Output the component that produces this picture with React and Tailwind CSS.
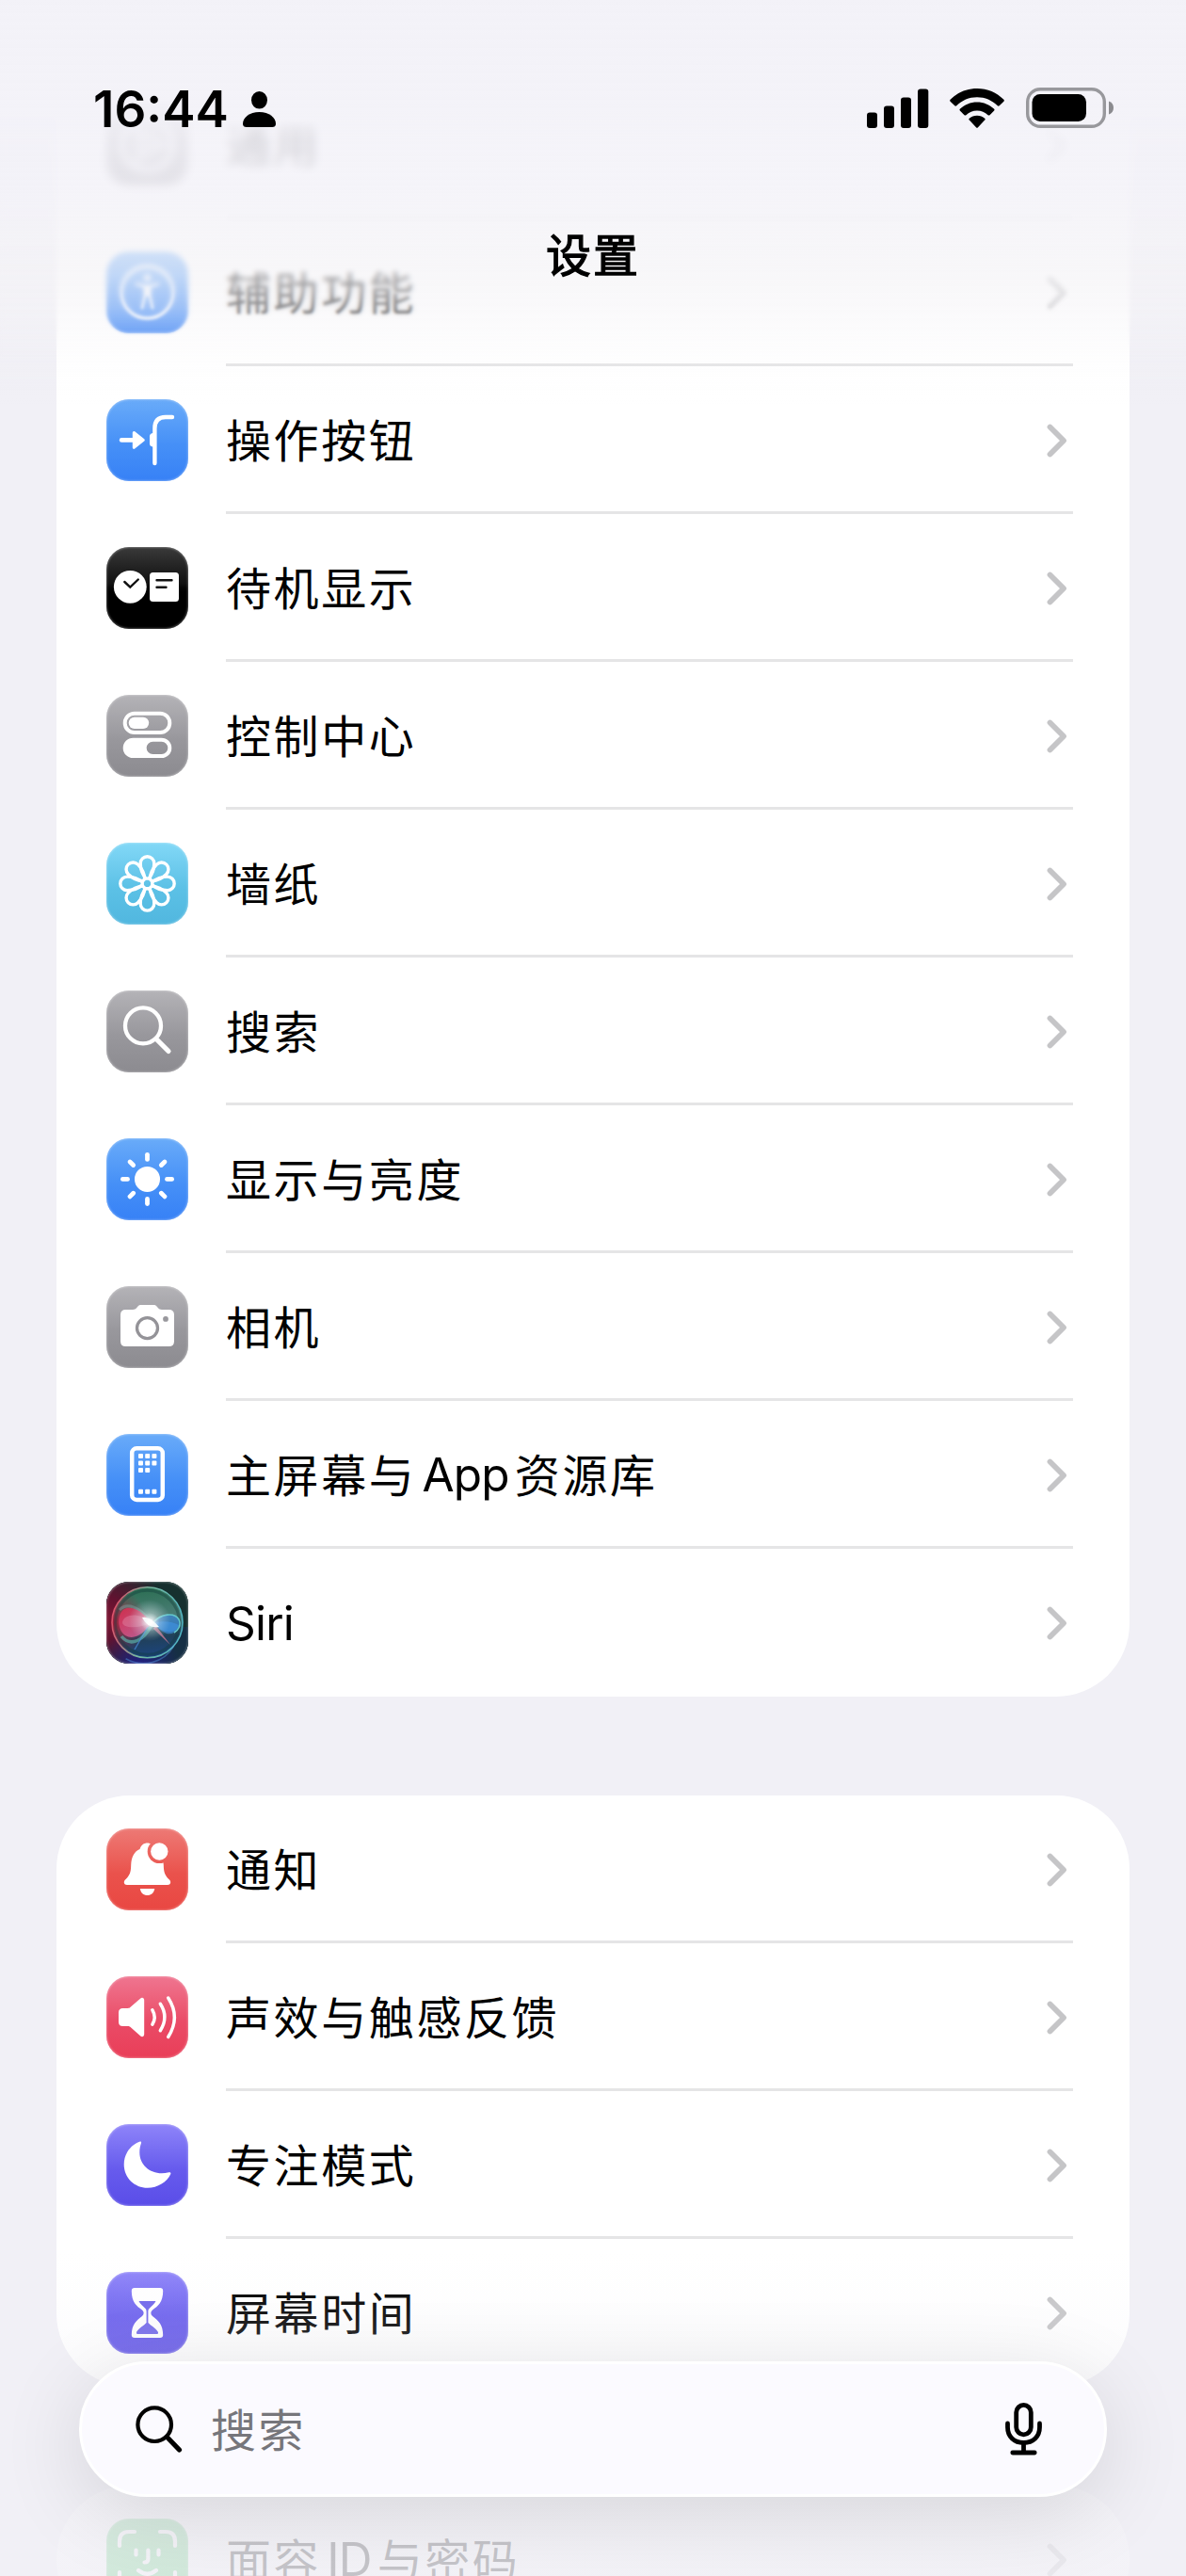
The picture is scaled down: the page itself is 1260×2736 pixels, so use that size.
const LATIN = 'font-["Inter","Liberation_Sans",sans-serif]';

function Glyph({ children }) {
  return (
    <svg viewBox="0 0 87 87" className="size-[87px]" fill="none">
      {children}
    </svg>
  );
}

const strokeProps = { stroke: "#fff", strokeLinecap: "round", strokeLinejoin: "round" };

function GeneralGlyph() {
  return (
    <Glyph>
      <circle cx="43.5" cy="43.5" r="27" {...strokeProps} strokeWidth="6" />
      <circle cx="43.5" cy="43.5" r="12" {...strokeProps} strokeWidth="4" />
      <path d="M43.5 43.5H68M43.5 43.5L31 22M43.5 43.5L31 65" {...strokeProps} strokeWidth="4" />
    </Glyph>
  );
}

function AccessibilityGlyph() {
  return (
    <Glyph>
      <circle cx="43.5" cy="43.5" r="27.5" {...strokeProps} strokeWidth="3.5" />
      <circle cx="43.5" cy="28" r="3.6" fill="#fff" />
      <path d="M32 34.500L41 37V46L38 60M55 34.500L46 37V46L49 60" {...strokeProps} strokeWidth="3" />
      <path d="M40 35.500h7v12h-7z" fill="#fff" />
    </Glyph>
  );
}

function ActionGlyph() {
  return (
    <Glyph>
      <path d="M16.200 43.400H30" {...strokeProps} strokeWidth="4.800" />
      <path d="M29.300 35.500L39.300 43.400L29.300 51.300Z" fill="#fff" {...strokeProps} strokeWidth="3" />
      <path d="M51.400 68V31Q51.400 19 63 19H70" {...strokeProps} strokeWidth="4.400" />
      <path d="M51 36H49Q46 36.500 46 39.500V47Q46 50 49 50.500H51Z" fill="#fff" />
    </Glyph>
  );
}

function StandByGlyph() {
  return (
    <Glyph>
      <circle cx="25.300" cy="42.300" r="17.400" fill="#fff" />
      <path d="M19.300 37L25.300 42.600L33.800 34.500" stroke="#111" strokeWidth="2.400" strokeLinecap="round" />
      <rect x="46" y="27" width="31" height="31" rx="3.500" fill="#fff" />
      <path d="M53.500 35.200H69.500M53.500 42.800H63.500" stroke="#111" strokeWidth="2.400" strokeLinecap="round" />
    </Glyph>
  );
}

function ControlGlyph() {
  return (
    <Glyph>
      <rect x="19.700" y="19.700" width="47.600" height="20.400" rx="10.200" stroke="#fff" strokeWidth="4" />
      <rect x="23.700" y="23.700" width="21.500" height="12.300" rx="6.150" fill="#fff" />
      <path
        fillRule="evenodd"
        fill="#fff"
        d="M28.400 45.700H58.600A10.700 10.700 0 0 1 58.600 67.100H28.400A10.700 10.700 0 0 1 28.400 45.700ZM49.300 49.700A6.650 6.650 0 0 0 49.300 63H58.700A6.650 6.650 0 0 0 58.700 49.700Z"
      />
    </Glyph>
  );
}

function FlowerGlyph() {
  return (
    <Glyph>
      <g {...strokeProps} strokeWidth="3.400">
        {[0, 45, 90, 135, 180, 225, 270, 315].map((a) => (
          <path
            key={a}
            transform={`translate(43.500 43.400) rotate(${a})`}
            d="M-1.500 -5.300C-6 -10.500 -7.300 -15 -7.300 -21.400A7.300 7.300 0 0 1 7.300 -21.400C7.300 -15 6 -10.500 1.500 -5.300Z"
          />
        ))}
      </g>
    </Glyph>
  );
}

function SearchGlyph() {
  return (
    <Glyph>
      <circle cx="39" cy="37.400" r="19" {...strokeProps} strokeWidth="4.300" />
      <path d="M53.500 52L66 64.500" {...strokeProps} strokeWidth="5.200" />
    </Glyph>
  );
}

function SunGlyph() {
  return (
    <Glyph>
      <circle cx="43.500" cy="43.400" r="13.500" fill="#fff" />
      {[0, 45, 90, 135, 180, 225, 270, 315].map((a) => (
        <path key={a} transform={`rotate(${a} 43.500 43.400)`} d="M43.500 17.300V22.400" {...strokeProps} strokeWidth="4.800" />
      ))}
    </Glyph>
  );
}

function CameraGlyph() {
  return (
    <Glyph>
      <path
        fill="#fff"
        d="M20.500 25H28C30 25 31 24.500 32 23.300L33.500 21.500C34.500 20.400 35.500 20 37 20H50C51.500 20 52.500 20.400 53.500 21.500L55 23.300C56 24.500 57 25 59 25H66.500Q72 25 72 30.500V58.500Q72 64 66.500 64H20.500Q15 64 15 58.500V30.500Q15 25 20.500 25Z"
      />
      <circle cx="43.500" cy="44.600" r="11" stroke="#949398" strokeWidth="3.300" />
      <circle cx="63" cy="34.900" r="2.900" fill="#99989d" />
    </Glyph>
  );
}

function HomeGlyph() {
  const cells = [
    [34, 21], [41.200, 21], [48.400, 21],
    [34, 28.600], [41.200, 28.600], [48.400, 28.600],
    [34, 36], [41.200, 36],
    [34, 58.800], [41.200, 58.800], [48.400, 58.800],
  ];
  return (
    <Glyph>
      <rect x="27.200" y="15.300" width="32.600" height="54.600" rx="5" stroke="#fff" strokeWidth="4.500" />
      {cells.map(([x, y]) => (
        <rect key={`${x}-${y}`} x={x} y={y} width="5" height="5" rx="1" fill="#fff" />
      ))}
    </Glyph>
  );
}

function SiriGlyph() {
  return (
    <Glyph>
      <defs>
        <radialGradient id="siriRed" cx="0" cy="0.45" r="0.75">
          <stop offset="0" stopColor="#7d1432" />
          <stop offset="0.35" stopColor="#611230" />
          <stop offset="1" stopColor="#611230" stopOpacity="0" />
        </radialGradient>
        <radialGradient id="siriBlue" cx="0.4" cy="1.05" r="0.5">
          <stop offset="0" stopColor="#1d1f8c" />
          <stop offset="1" stopColor="#241a80" stopOpacity="0" />
        </radialGradient>
        <linearGradient id="siriRing" x1="0" y1="0.4" x2="1" y2="0.6">
          <stop offset="0" stopColor="#e0506a" />
          <stop offset="0.45" stopColor="#76b8a0" />
          <stop offset="1" stopColor="#4fb4c4" />
        </linearGradient>
        <linearGradient id="siriOrb" x1="0.45" y1="0" x2="0.55" y2="1">
          <stop offset="0" stopColor="#2b6e52" />
          <stop offset="0.45" stopColor="#4b7d77" />
          <stop offset="0.72" stopColor="#20405a" />
          <stop offset="1" stopColor="#1c4580" />
        </linearGradient>
        <radialGradient id="siriOrbRed" cx="0" cy="0.5" r="0.5">
          <stop offset="0" stopColor="#a31c3a" />
          <stop offset="1" stopColor="#a31c3a" stopOpacity="0" />
        </radialGradient>
        <radialGradient id="siriGlow">
          <stop offset="0" stopColor="#fff" />
          <stop offset="0.25" stopColor="#fff" stopOpacity="0.7" />
          <stop offset="1" stopColor="#cfe8f0" stopOpacity="0" />
        </radialGradient>
        <linearGradient id="siriPink" x1="0" y1="0" x2="0.6" y2="1">
          <stop offset="0" stopColor="#dd2a4c" />
          <stop offset="1" stopColor="#d05c94" />
        </linearGradient>
      </defs>
      <rect width="87" height="87" fill="#16302f" />
      <rect y="48" x="40" width="47" height="39" fill="#16304a" opacity="0.8" />
      <rect width="87" height="87" fill="url(#siriRed)" />
      <rect width="87" height="87" fill="url(#siriBlue)" />
      <circle cx="43.500" cy="43.300" r="37.500" fill="url(#siriOrb)" />
      <circle cx="43.500" cy="43.300" r="37.500" fill="url(#siriOrbRed)" />
      <circle cx="43.500" cy="43.300" r="37.500" stroke="url(#siriRing)" strokeWidth="1.600" />
      <circle cx="43.500" cy="43.300" r="34" stroke="#123c3c" strokeWidth="3" opacity="0.4" />
      <path d="M18 80A37.500 37.500 0 0 0 70 70" stroke="#5aa8f0" strokeWidth="1.600" transform="rotate(-4 43.500 43.500)" opacity="0.4" />
      <path d="M16 58C26 70 40 62 48 46" stroke="#5ec2b4" strokeWidth="3.500" opacity="0.6" />
      <path d="M14 30C22 21 36 28 46 41" stroke="#7d9c9c" strokeWidth="3" opacity="0.5" />
      <path d="M48 44C38 30 26 25 19 29C11 34 11 51 20 57C30 63 40 54 48 44Z" fill="url(#siriPink)" opacity="0.85" />
      <path d="M48 43C34 32 19 34 17 43C17 50 36 50 48 43Z" fill="#e79ab8" opacity="0.35" />
      <path d="M50 43C58 34 72 32 77 40C80 48 73 57 64 55C58 53 54 48 50 43Z" fill="#3a84cf" opacity="0.75" />
      <path d="M50 44C60 41 70 42 77 46C74 56 60 56 50 44Z" fill="#3f94e4" opacity="0.6" />
      <path d="M50 43C58 34 72 32 77 40C80 46 76 52 72 54" stroke="#62c6cb" strokeWidth="1.600" />
      <path d="M52 46L68 67L50 50Z" fill="#d07d98" opacity="0.75" />
      <path d="M44 48L30 72" stroke="#4a90e0" strokeWidth="1.400" opacity="0.7" />
      <circle cx="46" cy="41" r="22" fill="url(#siriGlow)" opacity="0.65" />
      <path d="M38 38Q46 36 56 48Q44 50 38 38Z" fill="#fff" opacity="0.95" />
      <circle cx="46.500" cy="43" r="10" fill="url(#siriGlow)" />
    </Glyph>
  );
}

function BellGlyph() {
  return (
    <Glyph>
      <defs>
        <mask id="bellCut">
          <rect width="87" height="87" fill="#fff" />
          <circle cx="56.300" cy="24.500" r="12.600" fill="#000" />
        </mask>
      </defs>
      <path
        mask="url(#bellCut)"
        fill="#fff"
        d="M22 60C18.500 60 18 56.700 20 54.500C24.500 50 26 47.500 26.200 39C26.500 30 30 24 35.500 22C37 17.500 40 15.500 43.500 15.500C47 15.500 50 17.500 51.500 22C57 24.500 60.500 30 60.800 39C61 47.500 62.500 50 67 54.500C69 56.700 68.500 60 65 60Z"
      />
      <circle cx="56.300" cy="24.500" r="9.200" fill="#fff" />
      <path d="M35.800 64H51.300C50.500 68.500 47.500 71 43.500 71C39.500 71 36.500 68.500 35.800 64Z" fill="#fff" />
    </Glyph>
  );
}

function SpeakerGlyph() {
  return (
    <Glyph>
      <path
        fill="#fff"
        d="M17.500 34H23C24 34 24.600 33.800 25.300 33.100L36 23.700C38 22 40.200 23 40.200 25.500V61.500C40.200 64 38 65 36 63.300L25.300 53.800C24.600 53.100 24 53 23 53H17.500Q13 53 13 48.500V38.500Q13 34 17.500 34Z"
      />
      <g {...strokeProps} strokeWidth="3.500">
        <path d="M48.900 35.800Q53.500 43.400 48.900 51.200" />
        <path d="M57.300 29.300Q66.500 43.400 57.300 57.700" />
        <path d="M65.700 23Q79 43.400 65.700 64.500" />
      </g>
    </Glyph>
  );
}

function MoonGlyph() {
  return (
    <Glyph>
      <path
        fill="#fff"
        d="M35.800 18.600C25.500 22.500 18.700 31.500 18.700 43C18.700 57 30 67.800 43.800 67.800C54.500 67.800 64.500 61.500 68.200 53.300C68.900 51.600 67.800 50.800 66.300 51.300C50 55.500 35.300 45.500 35.300 30C35.300 26 36 23 37 20.200C37.400 18.900 36.900 18.200 35.800 18.600Z"
      />
    </Glyph>
  );
}

function HourglassGlyph() {
  return (
    <Glyph>
      <path
        fill="#fff"
        d="M30 17H57Q60.200 17 60.200 20.200C60.200 32 55 36 49 40.500C46.800 42.200 46.800 45.200 49 47C55 51.500 60.200 56 60.200 67Q60.200 70 57 70H30Q26.800 70 26.800 67C26.800 56 32 51.500 38 47C40.200 45.200 40.200 42.200 38 40.500C32 36 26.800 32 26.800 20.200Q26.800 17 30 17Z"
      />
      <path
        fill="#6d63ea"
        d="M34.500 31H52.500C51.500 34 48 36.200 45.500 39C44.500 40 44.400 41 44.400 43V54C47 57 52 59 55 64Q55.500 66 54 66H33Q31.500 66 32 64C35 59 40 57 42.600 54V43C42.600 41 42.500 40 41.500 39C39 36.200 35.500 34 34.500 31Z"
      />
    </Glyph>
  );
}

function FaceGlyph() {
  return (
    <Glyph>
      <g {...strokeProps} strokeWidth="4.200">
        <path d="M14 29V24Q14 14 24 14H30M57 14H63Q73 14 73 24V29M14 57V63Q14 73 24 73H30M57 73H63Q73 73 73 63V57" />
        <path d="M31.500 33.500V38.500M55.500 33.500V38.500M44.400 33.500V43Q44.400 46.500 40.500 46.500M34 55Q43.500 62.500 53 55" />
      </g>
    </Glyph>
  );
}

const BLUE = "bg-linear-to-b from-[#69abf9] via-[#4690f7] via-55% to-[#3781f6]";
const GRAY = "bg-linear-to-b from-[#b4b3b7] via-[#98979c] via-55% to-[#8c8b90]";
const INDIGO = "bg-linear-to-b from-[#8f84f9] via-[#675bed] via-55% to-[#5a4de8]";

const groups = [
  [
    { label: "通用", Icon: GeneralGlyph, tile: GRAY },
    { label: "辅助功能", Icon: AccessibilityGlyph, tile: BLUE },
    { label: "操作按钮", Icon: ActionGlyph, tile: BLUE },
    { label: "待机显示", Icon: StandByGlyph, tile: "bg-linear-to-b from-[#3a3a3a] via-[#111111] via-45% to-black to-60%" },
    { label: "控制中心", Icon: ControlGlyph, tile: GRAY },
    { label: "墙纸", Icon: FlowerGlyph, tile: "bg-linear-to-b from-[#82d8f7] via-[#5cc1e6] via-55% to-[#51b7df]" },
    { label: "搜索", Icon: SearchGlyph, tile: GRAY },
    { label: "显示与亮度", Icon: SunGlyph, tile: BLUE },
    { label: "相机", Icon: CameraGlyph, tile: GRAY },
    { label: "主屏幕与", latin: "App", rest: "资源库", Icon: HomeGlyph, tile: BLUE },
    { latin: "Siri", Icon: SiriGlyph, tile: "bg-[#16302f]" },
  ],
  [
    { label: "通知", Icon: BellGlyph, tile: "bg-linear-to-b from-[#ed7975] via-[#ea524c] via-55% to-[#e94742]" },
    { label: "声效与触感反馈", Icon: SpeakerGlyph, tile: "bg-linear-to-b from-[#ef7590] via-[#ea4b67] via-55% to-[#e93e58]" },
    { label: "专注模式", Icon: MoonGlyph, tile: INDIGO },
    { label: "屏幕时间", Icon: HourglassGlyph, tile: INDIGO },
  ],
  [{ label: "面容", latin: "ID", rest: "与密码", Icon: FaceGlyph, tile: "bg-linear-to-b from-[#5fd07a] to-[#34c759]" }],
];

function Chevron() {
  return (
    <svg viewBox="0 0 22 36" className="mr-[6px] mt-[3px] h-9 w-[22px]" fill="none">
      <path d="M3.500 3.500L18 18L3.500 32.500" stroke="#c5c5c7" strokeWidth="5.800" strokeLinecap="round" strokeLinejoin="round" />
    </svg>
  );
}

function Row({ item, last }) {
  const { label, latin, rest, Icon, tile } = item;
  return (
    <li className="flex h-[157px] pl-[53px] pr-[60px]">
      <div className={`relative mr-10 mt-[35px] size-[87px] shrink-0 overflow-hidden rounded-[24px] ${tile}`}>
        <Icon />
        <div className="absolute inset-0 rounded-[24px] shadow-[inset_0_0_2px_1px_rgba(255,255,255,0.28)]" />
      </div>
      <div className={`flex flex-1 items-center justify-between border-b-[3px] ${last ? "border-transparent" : "border-[#e5e5e6]"}`}>
        <span className={`flex items-center whitespace-nowrap text-[48px] leading-[60px] tracking-[2.6px] text-black ${label ? "mb-[2px]" : "mt-[3px]"}`}>
          {label}
          {latin && (
            <span className={`${LATIN} text-[49.500px] tracking-[-0.8px] ${label ? "ml-[6px] mr-[6px] mt-1" : ""}`}>{latin}</span>
          )}
          {rest}
        </span>
        <Chevron />
      </div>
    </li>
  );
}

function StatusBar() {
  return (
    <div className="flex h-[43px] items-center justify-between pl-[99px] pr-[77px]">
      <div className="flex items-center gap-[15px] pt-[3px]">
        <span className={`${LATIN} text-[53px] font-semibold leading-[43px] tracking-[0px]`}>16:44</span>
        <svg viewBox="0 0 35 38" className="h-[38px] w-[35px]">
          <ellipse cx="17.500" cy="9.300" rx="8.500" ry="9.300" />
          <path d="M4 38Q0 38 0 34.500C0 28 7 22 17.500 22C28 22 35 28 35 34.500Q35 38 31 38Z" />
        </svg>
      </div>
      <div className="flex items-center">
        <svg viewBox="0 0 66 42" className="h-[42px] w-[66px]">
          <rect x="0" y="25.500" width="11" height="16.500" rx="3" />
          <rect x="18" y="18.500" width="11" height="23.500" rx="3" />
          <rect x="36" y="9.500" width="11" height="32.500" rx="3" />
          <rect x="54" y="0.500" width="11.300" height="41.500" rx="3" />
        </svg>
        <svg viewBox="0 0 58 42" className="ml-[22px] h-[42px] w-[58px]">
          <path d="M29 0C40 0 50 4.300 57.400 11.800Q58.300 12.800 57.400 13.700L52.700 18.300Q51.800 19.200 50.800 18.300C45 12.600 37.500 9.300 29 9.300C20.500 9.300 13 12.600 7.200 18.300Q6.200 19.200 5.300 18.300L0.600 13.700Q-0.300 12.800 0.600 11.800C8 4.300 18 0 29 0Z" />
          <path d="M29 14.500C36 14.500 42.300 17.200 47.200 21.800Q48 22.600 47.200 23.600L42.500 28.200Q41.600 29 40.600 28.200C37.500 25.300 33.500 23.500 29 23.500C24.500 23.500 20.500 25.300 17.400 28.200Q16.400 29 15.500 28.200L10.800 23.600Q10 22.600 10.800 21.800C15.700 17.200 22 14.500 29 14.500Z" />
          <path d="M29 28.800C32.200 28.800 35 29.900 37.200 31.700Q38.200 32.600 37.200 33.600L30 41.200Q29 42.200 28 41.200L20.800 33.600Q19.800 32.600 20.800 31.700C23 29.900 25.800 28.800 29 28.800Z" />
        </svg>
        <svg viewBox="0 0 93 43" className="ml-[23px] h-[43px] w-[93px]" fill="none">
          <rect x="1.700" y="1.700" width="81.600" height="39.600" rx="13.500" stroke="#98989c" strokeWidth="3.400" />
          <rect x="6.500" y="7" width="57.500" height="29" rx="8.500" fill="#000" />
          <path d="M88 14.500C91 15.500 93 18 93 21.500C93 25 91 27.500 88 28.500Z" fill="#8b8b8f" />
        </svg>
      </div>
    </div>
  );
}

export default function App() {
  return (
    <div className='relative h-[2736px] w-[1260px] overflow-hidden bg-[#f1f0f6] font-["Noto_Sans_CJK_SC",sans-serif] text-black'>
      <main className="flex flex-col gap-[105px] px-[60px] pt-[75px]">
        {groups.map((items, g) => (
          <ul key={g} className="rounded-[78px] bg-white">
            {items.map((item, i) => (
              <Row key={i} item={item} last={i === items.length - 1 && g < 2} />
            ))}
          </ul>
        ))}
      </main>

      <header className="absolute inset-x-0 top-0 h-[430px]">
        <div className="absolute inset-x-0 top-0 h-[380px] backdrop-blur-[1.5px] [mask-image:linear-gradient(to_bottom,black_340px,transparent_380px)]" />
        <div className="absolute inset-x-0 top-0 h-[350px] backdrop-blur-[2.5px] [mask-image:linear-gradient(to_bottom,black_300px,transparent_350px)]" />
        <div className="absolute inset-x-0 top-0 h-[270px] backdrop-blur-[4px] [mask-image:linear-gradient(to_bottom,black_200px,transparent_270px)]" />
        <div className="absolute inset-0 bg-[linear-gradient(to_bottom,rgb(243_242_248)_0px,rgb(243_242_248/0.95)_120px,rgb(243_242_248/0.87)_150px,rgb(243_242_248/0.84)_200px,rgb(244_243_247/0.78)_250px,rgb(244_243_246/0.68)_290px,rgb(245_244_247/0.52)_325px,rgb(245_244_247/0.32)_352px,rgb(245_244_247/0.1)_385px,rgb(245_244_247/0)_430px)]" />
        <div className="relative pt-[93px]">
          <StatusBar />
          <h1 className="mt-[102px] text-center text-[48px] leading-[60px] tracking-[2px] [-webkit-text-stroke:1.3px_black]">设置</h1>
        </div>
      </header>

      <footer className="absolute inset-x-0 bottom-0 h-[346px]">
        <div className="absolute inset-0 bg-[linear-gradient(to_bottom,rgb(241_240_246/0)_0px,rgb(241_240_246/0.07)_50px,rgb(241_240_246/0.22)_112px,rgb(241_240_246/0.82)_260px,rgb(241_240_246/0.82)_346px)]" />
        <div className="relative mx-[84px] mt-[118px] flex h-36 items-center rounded-full border-[3px] border-white bg-[#fbfaff] pl-[57px] pr-[66px] shadow-[0_18px_90px_rgba(0,0,0,0.12)]">
          <svg viewBox="0 0 50 50" className="size-[50px]" fill="none" stroke="#000" strokeLinecap="round">
            <circle cx="20.200" cy="20.200" r="17.800" strokeWidth="4.200" />
            <path d="M33.500 33.500L46.500 47" strokeWidth="5.200" />
          </svg>
          <span className="mb-1 ml-[30px] flex-1 text-[48px] leading-[60px] tracking-[2.5px] text-[#76767b]">搜索</span>
          <svg viewBox="0 0 39 56" className="h-14 w-[39px]" fill="none" stroke="#000" strokeWidth="4.800" strokeLinecap="round">
            <rect x="11.700" y="2.400" width="15.600" height="31.400" rx="7.800" />
            <path d="M2.500 22V26C2.500 36 9.500 42.500 19.500 42.500C29.500 42.500 36.500 36 36.500 26V22M19.500 43V52.500M7.800 53H31.200" />
          </svg>
        </div>
      </footer>
    </div>
  );
}
